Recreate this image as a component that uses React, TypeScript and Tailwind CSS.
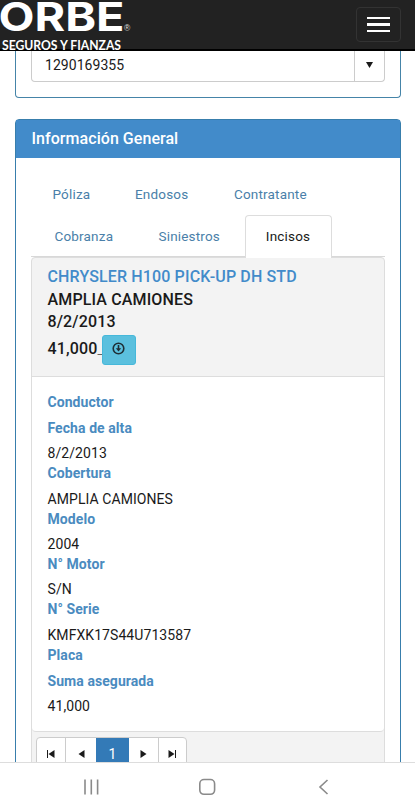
import React from 'react';

const fields = [
  { label: 'Conductor', value: '' },
  { label: 'Fecha de alta', value: '8/2/2013' },
  { label: 'Cobertura', value: 'AMPLIA CAMIONES' },
  { label: 'Modelo', value: '2004' },
  { label: 'N° Motor', value: 'S/N' },
  { label: 'N° Serie', value: 'KMFXK17S44U713587' },
  { label: 'Placa', value: '' },
  { label: 'Suma asegurada', value: '41,000' },
];

const Navbar: React.FC = () => (
  <header className="flex h-[51px] shrink-0 justify-between border-b-2 border-black bg-[#222222]">
    <svg width="134" height="51" viewBox="0 0 134 51" className="shrink-0 overflow-visible fill-white">
      <text x="-1.5" y="30.5" textLength="126" lengthAdjust="spacingAndGlyphs" fontFamily="Inter, sans-serif" fontWeight="700" fontSize="40">ORBE</text>
      <text x="124" y="30.5" fontFamily="Liberation Sans, sans-serif" fontSize="8.5" fill="#dddddd">®</text>
      <text x="2" y="49.5" textLength="119" lengthAdjust="spacingAndGlyphs" fontFamily="Lato, sans-serif" fontWeight="700" fontSize="13.5">SEGUROS Y FIANZAS</text>
    </svg>
    <button className="mt-[7px] mr-[14px] flex h-[35px] w-[45px] flex-col items-center justify-center gap-[4px] rounded border border-[#333333]">
      <span className="h-[2.3px] w-[23px] bg-white" />
      <span className="h-[2.3px] w-[23px] bg-white" />
      <span className="h-[2.3px] w-[23px] bg-white" />
    </button>
  </header>
);

const Tabs: React.FC = () => (
  <nav className="text-[13.5px] tracking-[0.18px] text-[#4a7fa9]">
    <div className="flex h-[41px] items-center pl-[21.5px]">
      <a className="w-[82.5px]">Póliza</a>
      <a className="w-[99px]">Endosos</a>
      <a>Contratante</a>
    </div>
    <div className="flex h-[42px] items-center border-b border-[#d8d8d8] pl-[23.5px]">
      <a className="w-[104px] pt-px">Cobranza</a>
      <a className="w-[86px] pt-px">Siniestros</a>
      <a className="-mb-px flex h-[43px] w-[87px] items-center justify-center rounded-t border border-b-0 border-[#dddddd] bg-white text-[#1a1a1a]">Incisos</a>
    </div>
  </nav>
);

const Pager: React.FC = () => (
  <div className="flex h-[40px] w-[151px] overflow-hidden rounded border border-[#cccccc] bg-white text-[#1a1a1a]">
    <a className="flex w-[29px] items-center justify-center border-r border-[#cccccc] pb-[6px]">
      <svg width="8" height="8" viewBox="0 0 8 8" fill="currentColor"><path d="M0 0h1v8H0zM7.5 0v8L1.5 4z" /></svg>
    </a>
    <a className="flex w-[30px] items-center justify-center pb-[6px]">
      <svg width="7" height="8" viewBox="0 0 7 8" fill="currentColor"><path d="M6.5 0v8L.5 4z" /></svg>
    </a>
    <a className="flex w-[33px] items-center justify-center bg-[#337ab7] pb-[6px] text-[14px] text-white">1</a>
    <a className="flex w-[30px] items-center border-r border-[#cccccc] pb-[6px] pl-[11px]">
      <svg width="7" height="8" viewBox="0 0 7 8" fill="currentColor"><path d="M.5 0v8l6-4z" /></svg>
    </a>
    <a className="flex w-[27px] items-center pb-[6px] pl-[9px]">
      <svg width="8" height="8" viewBox="0 0 8 8" fill="currentColor"><path d="M7 0h1v8H7zM.5 0v8l6-4z" /></svg>
    </a>
  </div>
);

const AndroidBar: React.FC = () => (
  <footer className="h-[38px] shrink-0 border-t border-[#dddddd] bg-white">
    <svg width="415" height="37" viewBox="0 0 415 37" fill="none" stroke="#8a8a8a" strokeWidth="1.6">
      <path d="M85 16.5v15M91.3 16.5v15M97.6 16.5v15" />
      <rect x="199.8" y="16.5" width="14.8" height="14.8" rx="4.2" />
      <path d="M327.5 17l-7.5 7 7.5 7" />
    </svg>
  </footer>
);

const App: React.FC = () => {
  return (
    <div className="flex h-[800px] w-[415px] flex-col overflow-hidden bg-white font-['Roboto',sans-serif] text-[#1a1a1a]">
      <Navbar />

      <main className="min-h-0 flex-1 overflow-hidden pr-[14px] pl-[15px]">
        <section className="h-[47px] rounded-b border border-t-0 border-[#4584a8] px-[15px]">
          <div className="flex h-[31px] rounded-b border border-t-0 border-[#cccccc] text-[14px]">
            <span className="flex-1 pt-[4px] pl-[13px] tracking-[0.05px]">1290169355</span>
            <span className="flex w-[30px] justify-center border-l border-[#cccccc] pt-[11px]">
              <svg width="7" height="6" viewBox="0 0 7 6" fill="currentColor"><path d="M0 0h7L3.5 6z" /></svg>
            </span>
          </div>
        </section>

        <section className="mt-[21px] h-[700px] rounded-t border border-[#387eac] bg-white">
          <h3 className="flex h-[38px] items-center bg-[#428bca] pl-[15.5px] text-[16px] font-medium tracking-[0.05px] text-white">Información General</h3>

          <div className="px-[15px] pt-[16px]">
            <Tabs />

            <div className="rounded border border-[#dddddd] bg-[#f3f3f3]">
              <div className="h-[119px] rounded-t border-b border-[#dddddd] pt-[8px] pl-[15.5px] text-[16px] leading-[22.5px] font-medium tracking-[0.14px]">
                <p className="text-[#428bca]">CHRYSLER H100 PICK-UP DH STD</p>
                <p>AMPLIA CAMIONES</p>
                <p>8/2/2013</p>
                <div className="flex h-[32px] items-center">
                  <span>41,000</span>
                  <span className="w-[4.5px] font-light text-[#555555]">_</span>
                  <button className="flex h-[30px] w-[34px] items-center justify-center rounded-[3px] border border-[#46b8da] bg-[#5bc0de]">
                    <svg width="13" height="13" viewBox="0 0 13 13" className="mb-[2px]" fill="none" stroke="#1f2f36" strokeWidth="1.6">
                      <circle cx="6.5" cy="6.5" r="5.3" />
                      <path d="M6.5 3v4" />
                      <path d="M3.8 6.3h5.4L6.5 9.5z" fill="#1f2f36" stroke="none" />
                    </svg>
                  </button>
                </div>
              </div>

              <dl className="h-[355px] rounded-b border-b border-[#dddddd] bg-white pt-[13px] pl-[15.5px] text-[14px] tracking-[0.07px]">
                {fields.map(({ label, value }) => (
                  <React.Fragment key={label}>
                    <dt className="h-[25.2px] leading-[25.2px] font-bold text-[#4a8bbf]">{label}</dt>
                    <dd className={value ? 'h-[20.2px] leading-[25px]' : 'h-[0.8px]'}>{value}</dd>
                  </React.Fragment>
                ))}
              </dl>

              <div className="pt-[5px] pl-[4px]">
                <Pager />
              </div>
            </div>
          </div>
        </section>
      </main>

      <AndroidBar />
    </div>
  );
};

export default App;
